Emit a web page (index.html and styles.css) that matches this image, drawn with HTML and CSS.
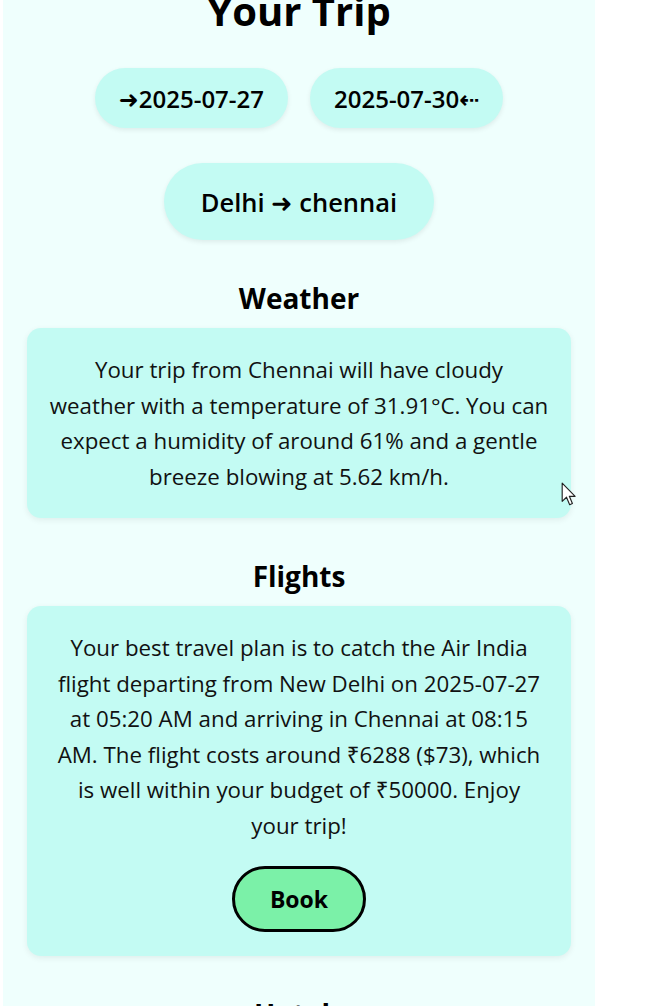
FILE: index.html
```html
<!DOCTYPE html>
<html lang="en">
<head>
<meta charset="utf-8">
<title>Your Trip</title>
<link rel="stylesheet" href="styles.css">
</head>
<body>
<main class="panel">
  <h1 class="title">Your Trip</h1>
  <div class="dates">
    <span class="pill date">➜2025-07-27</span>
    <span class="pill date">2025-07-30⇠</span>
  </div>
  <div class="route-row">
    <span class="pill route">Delhi ➜ chennai</span>
  </div>

  <section class="section">
    <h2 class="section-title">Weather</h2>
    <div class="card">
      <p class="card-text">Your trip from Chennai will have cloudy<br>weather with a temperature of 31.91°C. You can<br>expect a humidity of around 61% and a gentle<br>breeze blowing at 5.62 km/h.</p>
    </div>
  </section>

  <section class="section">
    <h2 class="section-title">Flights</h2>
    <div class="card">
      <p class="card-text">Your best travel plan is to catch the Air India<br>flight departing from New Delhi on 2025-07-27<br>at 05:20 AM and arriving in Chennai at 08:15<br>AM. The flight costs around ₹6288 ($73), which<br>is well within your budget of ₹50000. Enjoy<br>your trip!</p>
      <button class="book">Book</button>
    </div>
  </section>

  <section class="section">
    <h2 class="section-title">Hotels</h2>
  </section>
</main>
<svg class="cursor" width="16" height="25" viewBox="0 0 14 22" aria-hidden="true">
  <path d="M1 1 L1 17 L4.8 13.4 L7.6 20 L10 19 L7.3 12.6 L12.4 12.6 Z" fill="#ffffff" stroke="#222" stroke-width="1" stroke-linejoin="round"/>
</svg>
</body>
</html>
```

FILE: styles.css
```css
html, body {
  margin: 0;
  padding: 0;
  background: #ffffff;
}
body {
  position: relative;
  font-family: "Open Sans", "Noto Sans", "DejaVu Sans", sans-serif;
  color: #111;
  height: 1006px;
  overflow: hidden;
}
.panel {
  margin-left: 3px;
  width: 592px;
  min-height: 1100px;
  background: #effffd;
  box-sizing: border-box;
  padding: 0 24px;
  display: flex;
  flex-direction: column;
  align-items: stretch;
}
.title {
  margin: -17px 0 0;
  text-align: center;
  font-size: 40px;
  line-height: 56px;
  font-weight: 700;
  color: #000;
}
.dates {
  margin-top: 29px;
  display: flex;
  justify-content: center;
  gap: 22px;
}
.pill {
  background: #c3fbf3;
  border-radius: 999px;
  box-shadow: 0 2px 5px rgba(0, 0, 0, 0.08);
  display: inline-flex;
  align-items: center;
  justify-content: center;
  color: #000;
  font-weight: 600;
}
.date {
  height: 60px;
  padding: 0 24px;
  font-size: 24px;
}
.route-row {
  margin-top: 35px;
  display: flex;
  justify-content: center;
}
.route {
  height: 77px;
  padding: 0 37px;
  font-size: 25.5px;
}
.section {
  display: flex;
  flex-direction: column;
}
.section-title {
  margin: 40px 0 12px;
  text-align: center;
  font-size: 28px;
  line-height: 36px;
  font-weight: 700;
  color: #000;
}
.card {
  background: #c3fbf3;
  border-radius: 14px;
  box-shadow: 0 2px 6px rgba(0, 0, 0, 0.07);
  padding: 24px 16px;
  display: flex;
  flex-direction: column;
  align-items: center;
}
.card-text {
  margin: 0;
  text-align: center;
  font-size: 22.3px;
  line-height: 35.5px;
  color: #111;
  white-space: nowrap;
}
.book {
  margin-top: 23px;
  width: 134px;
  height: 66px;
  border: 3px solid #000;
  border-radius: 999px;
  background: #7bf1a8;
  font-family: inherit;
  font-size: 23px;
  font-weight: 700;
  color: #000;
}
.cursor {
  position: absolute;
  left: 561px;
  top: 482px;
}
```
